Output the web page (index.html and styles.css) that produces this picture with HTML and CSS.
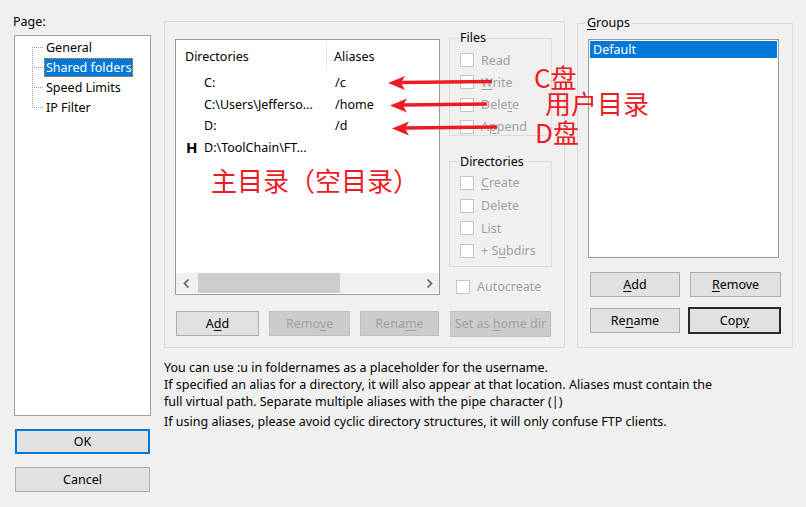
FILE: index.html
```html
<!DOCTYPE html>
<html>
<head>
<meta charset="utf-8">
<link rel="stylesheet" href="styles.css">
</head>
<body>
<div class="dlg">
  <div class="leftcol">
    <div class="pagelbl">Page:</div>
    <div class="tree">
      <div class="node"><svg class="conn" width="13" height="20" viewBox="0 0 13 20"><path d="M1.5 10V20M1 10.5H13"/></svg><span class="nlabel">General</span></div>
      <div class="node"><svg class="conn" width="13" height="20" viewBox="0 0 13 20"><path d="M1.5 0V20M1 10.5H13"/></svg><span class="nlabel sel">Shared folders</span></div>
      <div class="node"><svg class="conn" width="13" height="20" viewBox="0 0 13 20"><path d="M1.5 0V20M1 10.5H13"/></svg><span class="nlabel">Speed Limits</span></div>
      <div class="node"><svg class="conn" width="13" height="20" viewBox="0 0 13 20"><path d="M1.5 0V11M1 10.5H13"/></svg><span class="nlabel">IP Filter</span></div>
    </div>
    <div class="dlgbtns">
      <div class="btn okbtn"><span>OK</span></div>
      <div class="btn cancel"><span>Cancel</span></div>
    </div>
  </div>

  <div class="main">
    <div class="toprow">
      <div class="midbox">
        <div class="leftpane">
          <div class="list">
            <div class="lhead">
              <div class="hc1">Directories</div>
              <div class="hc2">Aliases</div>
            </div>
            <div class="lrows">
              <div class="lrow"><span class="ic"></span><span class="nm">C:</span><span class="al">/c</span></div>
              <div class="lrow"><span class="ic"></span><span class="nm">C:\Users\Jefferso...</span><span class="al">/home</span></div>
              <div class="lrow"><span class="ic"></span><span class="nm">D:</span><span class="al">/d</span></div>
              <div class="lrow"><span class="ic">H</span><span class="nm">D:\ToolChain\FT...</span><span class="al"></span></div>
            </div>
            <div class="hscroll">
              <div class="arr"><svg width="7" height="9" viewBox="0 0 7 9"><path d="M5.5 0.5L1.5 4.5L5.5 8.5"/></svg></div>
              <div class="track"><div class="thumb"></div></div>
              <div class="arr"><svg width="7" height="9" viewBox="0 0 7 9"><path d="M1.5 0.5L5.5 4.5L1.5 8.5"/></svg></div>
            </div>
          </div>
          <div class="btnrow">
            <div class="btn b-add"><span>A<u>d</u>d</span></div>
            <div class="btn dis b-rem"><span>Remo<u>v</u>e</span></div>
            <div class="btn dis b-ren"><span>Rena<u>m</u>e</span></div>
          </div>
        </div>
        <div class="rightpane">
          <fieldset class="sub files">
            <legend>Files</legend>
            <div class="rows">
              <div class="chk"><span class="box"></span><span>Read</span></div>
              <div class="chk"><span class="box"></span><span><u>W</u>rite</span></div>
              <div class="chk"><span class="box"></span><span>Dele<u>t</u>e</span></div>
              <div class="chk"><span class="box"></span><span>A<u>p</u>pend</span></div>
            </div>
          </fieldset>
          <fieldset class="sub dirs">
            <legend>Directories</legend>
            <div class="rows">
              <div class="chk"><span class="box"></span><span><u>C</u>reate</span></div>
              <div class="chk"><span class="box"></span><span>Delete</span></div>
              <div class="chk"><span class="box"></span><span>List</span></div>
              <div class="chk"><span class="box"></span><span>+ S<u>u</u>bdirs</span></div>
            </div>
          </fieldset>
          <div class="chk auto"><span class="box"></span><span>Autocreate</span></div>
          <div class="btn dis home"><span>Set as <u>h</u>ome dir</span></div>
        </div>
      </div>

      <fieldset class="groups">
        <legend><u>G</u>roups</legend>
        <div class="glist">
          <div class="gsel">Default</div>
        </div>
        <div class="gbtns">
          <div class="btn"><span><u>A</u>dd</span></div>
          <div class="btn"><span><u>R</u>emove</span></div>
          <div class="btn"><span>Re<u>n</u>ame</span></div>
          <div class="btn copy"><span>Cop<u>y</u></span></div>
        </div>
      </fieldset>
    </div>

    <div class="help">
      <p>You can use :u in foldernames as a placeholder for the username.</p>
      <p>If specified an alias for a directory, it will also appear at that location. Aliases must contain the<br>full virtual path. Separate multiple aliases with the pipe character (|)</p>
      <p class="p3">If using aliases, please avoid cyclic directory structures, it will only confuse FTP clients.</p>
    </div>
  </div>

  <svg class="arrows" width="130" height="70" viewBox="380 70 130 70">
    <path class="shaft" d="M400 82.5L492 81.5"/>
    <path class="head" d="M388 83L405 76L401 83L405 90Z"/>
    <path class="shaft" d="M402 105L487 104"/>
    <path class="head" d="M390 105.5L407 98.5L403 105.5L407 112.5Z"/>
    <path class="shaft" d="M404 128L497 127"/>
    <path class="head" d="M392 128.5L409 121.5L405 128.5L409 135.5Z"/>
  </svg>
  <div class="note n-c">C盘</div>
  <div class="note n-home">用户目录</div>
  <div class="note n-d">D盘</div>
  <div class="note n-main">主目录（空目录）</div>
</div>
</body>
</html>
```

FILE: styles.css
```css
* { box-sizing: border-box; }
html, body { margin: 0; padding: 0; }
body {
  width: 806px;
  height: 507px;
  overflow: hidden;
  background: #f0f0f0;
  font-family: "Noto Sans", "Liberation Sans", sans-serif;
  font-size: 12.5px;
  color: #000;
}
u { text-decoration: underline; text-underline-offset: 2px; }

.dlg {
  position: relative;
  width: 806px;
  height: 507px;
  display: flex;
  padding: 14px 0 0 13px;
}

/* left column */
.leftcol { width: 138px; display: flex; flex-direction: column; flex: none; }
.pagelbl { height: 16px; line-height: 16px; }
.tree {
  margin: 5px 0 0 1px;
  width: 137px;
  height: 381px;
  background: #fff;
  border: 1px solid #a0a0a0;
  padding-top: 1px;
}
.node { height: 20px; display: flex; align-items: flex-end; }
.conn { margin-left: 16px; flex: none; align-self: center; }
.conn path { fill: none; stroke: #a0a0a0; stroke-width: 1; stroke-dasharray: 1 1; shape-rendering: crispEdges; }
.nlabel { height: 19px; line-height: 19px; padding: 0 2px; white-space: nowrap; }
.nlabel.sel {
  background: #0078d7;
  color: #fff;
  outline: 1px dotted #ff8728;
  outline-offset: -1px;
}

.dlgbtns { margin-top: 13px; display: flex; flex-direction: column; gap: 13px; }
.btn {
  display: flex;
  align-items: center;
  justify-content: center;
  height: 25px;
  background: #e1e1e1;
  border: 1px solid #adadad;
  white-space: nowrap;
}
.okbtn, .cancel { margin-left: 2px; width: 135px; }
.okbtn { border: 2px solid #0078d7; }
.dis { background: #cccccc; border-color: #bfbfbf; color: #a0a0a0; }

/* main area */
.main { margin-left: 13px; margin-top: 7px; display: flex; flex-direction: column; flex: none; }
.toprow { display: flex; align-items: flex-start; }
.midbox {
  width: 401px;
  height: 327px;
  border: 1px solid #dcdcdc;
  padding: 8px 12px 0 10px;
  display: flex;
  gap: 9px;
  flex: none;
}
.leftpane { width: 265px; margin-top: 9px; flex: none; }
.list {
  height: 256px;
  background: #fff;
  border: 1px solid #9b9b9b;
  display: flex;
  flex-direction: column;
}
.lhead { height: 32px; display: flex; flex: none; }
.hc1 {
  width: 151px;
  margin: 2px 0;
  padding-left: 9px;
  border-right: 1px solid #e5e5e5;
  display: flex;
  align-items: center;
}
.hc2 { padding-left: 7px; display: flex; align-items: center; }
.lrows { flex: 1; }
.lrow { height: 21.5px; display: flex; align-items: center; white-space: nowrap; }
.ic { width: 28px; padding-left: 10px; font-weight: bold; font-size: 15px; flex: none; }
.nm { width: 131px; overflow: hidden; flex: none; }
.hscroll { height: 20px; margin-bottom: 1px; display: flex; background: #f0f0f0; flex: none; }
.arr { width: 20px; display: flex; align-items: center; justify-content: center; flex: none; }
.arr path { fill: none; stroke: #606060; stroke-width: 1.6; }
.track { flex: 1; display: flex; }
.thumb { margin-left: 2px; width: 142px; background: #cdcdcd; }

.btnrow { margin-top: 16px; display: flex; justify-content: space-between; padding: 0 1px; }
.b-add { width: 83px; }
.b-rem { width: 81px; }
.b-ren { width: 79px; }

.rightpane { width: 103px; display: flex; flex-direction: column; flex: none; }
fieldset {
  margin: 0;
  min-width: 0;
  border: 1px solid #dcdcdc;
}
legend { padding: 0 1px; margin-left: -1px; height: 16px; line-height: 16px; }
.sub { padding: 0 0 0 10px; }
.rows { display: flex; flex-direction: column; }
.files .rows { margin-top: 6px; gap: 6.33px; }
.dirs { margin-top: 18px; padding-bottom: 7px; }
.dirs .rows { margin-top: 5px; gap: 6.67px; }
.chk { display: flex; align-items: center; height: 16px; gap: 7px; color: #a0a0a0; white-space: nowrap; }
.box { width: 14px; height: 14px; border: 1px solid #c4c4c4; background: #fff; flex: none; }
.auto { margin-top: 12px; margin-left: 7px; }
.home { margin-top: 16px; margin-left: 1px; width: 101px; height: 26px; }

.groups {
  margin: -6px 0 0 12px;
  width: 216px;
  padding: 0 13px 14px 10px;
  flex: none;
}
.groups legend { margin-left: -2px; }
.glist {
  margin-top: 8px;
  width: 191px;
  height: 219px;
  background: #fff;
  border: 1px solid #9b9b9b;
  padding: 1px;
}
.gsel { height: 17px; line-height: 17px; padding-left: 3px; background: #0078d7; color: #fff; }
.gbtns {
  margin-top: 14px;
  display: grid;
  grid-template-columns: 90px 91px;
  column-gap: 10px;
  row-gap: 11px;
  padding-left: 2px;
}
.copy { border: 2px solid #2b2b2b; width: 93px; height: 27px; margin: -1px 0 -1px -2px; justify-self: start; }

.help { margin-top: 11px; line-height: 17px; }
.help p { margin: 0; white-space: nowrap; }
.help .p3 { margin-top: 3px; }

/* annotations overlaid on the screenshot */
.arrows { position: absolute; left: 380px; top: 70px; }
.arrows .shaft { fill: none; stroke: #ec1c24; stroke-width: 3.5; }
.arrows .head { fill: #ec1c24; }
.note {
  position: absolute;
  color: #ec1c24;
  font-family: "Noto Sans CJK SC", sans-serif;
  font-size: 26px;
  line-height: 22px;
  height: 22px;
  white-space: nowrap;
}
.n-c { left: 534px; top: 66px; }
.n-home { left: 545px; top: 92px; }
.n-d { left: 535px; top: 121px; }
.n-main { left: 211px; top: 169px; }
```
